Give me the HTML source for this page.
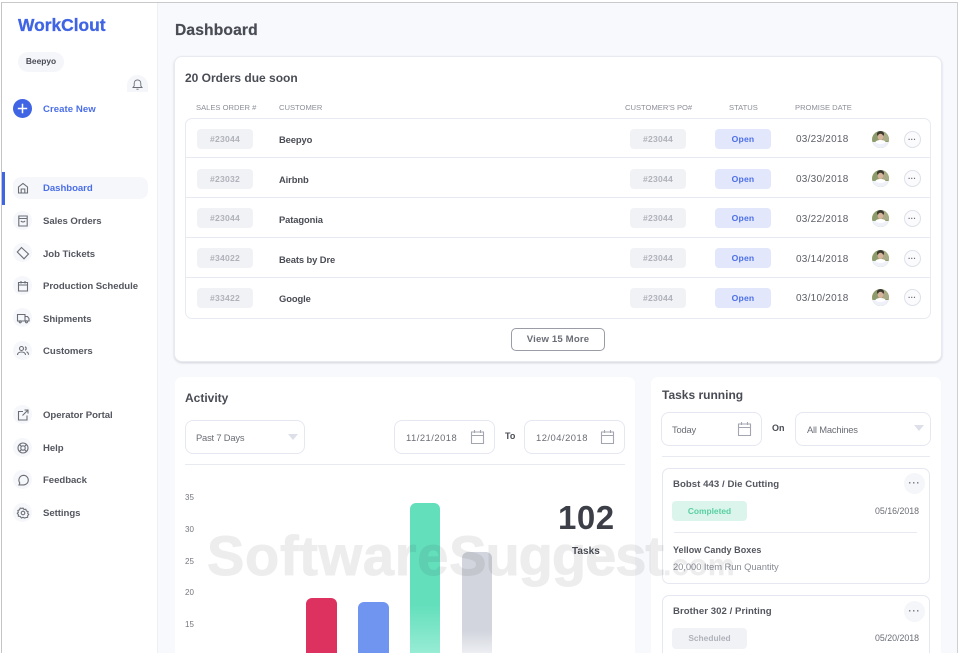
<!DOCTYPE html>
<html><head><meta charset="utf-8"><title>WorkClout Dashboard</title>
<style>
*{box-sizing:border-box}
html,body{margin:0;padding:0;width:960px;height:653px;overflow:hidden}
body{background:#fff;font-family:"Liberation Sans",sans-serif;color:#4a4c55}
#w{position:relative;width:960px;height:653px;overflow:hidden;background:#fff}
.a{position:absolute;white-space:nowrap}
.nav{position:absolute;left:43px;font-size:9.6px;font-weight:700;color:#54565f;line-height:12px;letter-spacing:-.05px}
.ic{position:absolute;left:13px;width:19px;height:19px;border-radius:50%;background:#f6f7fb}
.ic svg{position:absolute;left:2.5px;top:2.5px;width:14px;height:14px;fill:none;stroke:#6b6e78;stroke-width:1.1}
.card{position:absolute;background:#fff;border-radius:7px}
.th{position:absolute;top:103px;font-size:7.6px;line-height:10px;color:#8d8f99}
.pill{position:absolute;width:56px;height:20px;border-radius:4px;background:#f1f2f6;color:#b0b2bb;font-size:8.6px;font-weight:700;line-height:20px;text-align:center;letter-spacing:.2px}
.open{background:#e2e7fb;color:#4c6fe8}
.cust{position:absolute;left:279px;font-size:9.4px;font-weight:700;color:#4a4c55;line-height:12px;letter-spacing:-.1px}
.date{position:absolute;left:796px;font-size:10px;color:#5d5f68;line-height:12px;letter-spacing:.25px}
.hr{position:absolute;left:186px;width:744px;height:1px;background:#e8eaf2}
.av{position:absolute;left:871.5px;width:17px;height:17px}
.more{position:absolute;left:903.500px;width:17px;height:17px;border-radius:50%;border:1px solid #dfe1ea;background:#fbfbfd;color:#6b6e78;font-size:8px;line-height:16px;text-align:center;font-weight:700}
.inp{position:absolute;height:34px;border:1px solid #e6e8f1;border-radius:8px;background:#fff;font-size:9.4px;color:#6b6d76;line-height:33px;letter-spacing:-.2px}
.dt{letter-spacing:.5px}
.cal{position:absolute;width:15px;height:16px;fill:none;stroke:#a3a6b1;stroke-width:1.1}
.tri{position:absolute;width:0;height:0;border-left:5px solid transparent;border-right:5px solid transparent;border-top:6px solid #dddfe9}
.h2{font-size:12px;font-weight:700;color:#4a4c55;line-height:15px}
.tb{font-size:9.6px;font-weight:700;color:#54565f;line-height:12px;letter-spacing:.05px}
.dots{position:absolute;left:904px;width:21px;height:21px;border-radius:50%;background:#f5f6fa;color:#666973;font-size:9px;font-weight:700;text-align:center;line-height:21px;letter-spacing:1px}
.bar{position:absolute;border-radius:6px 6px 0 0}
.yl{position:absolute;left:185px;font-size:8px;color:#74767f;line-height:10px}
</style></head><body><div id="w">
<!-- main bg -->
<div class="a" style="left:157px;top:0;width:803px;height:653px;background:#f8f9fc"></div>
<div class="a" style="left:157px;top:0;width:1px;height:653px;background:#eef0f5"></div>

<!-- sidebar -->
<div class="a" style="left:18px;top:15px;font-size:17.4px;font-weight:700;color:#3f64e4;line-height:20px;-webkit-text-stroke:.3px #3f64e4">WorkClout</div>
<div class="a" style="left:18px;top:52px;width:46px;height:20px;border-radius:10px;background:#f5f6fa;font-size:8.4px;font-weight:700;line-height:19px;text-align:center;color:#4a4c55">Beepyo</div>
<div class="a" style="left:127px;top:75px;width:21px;height:17px;border-radius:11px 11px 0 0;background:#f5f6fa"></div>
<svg class="a" style="left:132px;top:78px" width="11" height="13" viewBox="0 0 11 13" fill="none" stroke="#6b6e78" stroke-width=".9"><path d="M1 9.500h9l-1.200-1.600V5.200a3.300 3.300 0 0 0-6.600 0v2.700zM4.400 11.200h2.200"/></svg>
<div class="a" style="left:13px;top:99px;width:19px;height:19px;border-radius:50%;background:#3f64e4"></div>
<svg class="a" style="left:13px;top:99px" width="19" height="19" stroke="#fff" stroke-width="1.5"><path d="M9.500 4.800v9.400M4.800 9.500h9.400"/></svg>
<div class="a" style="left:43px;top:104px;font-size:9.6px;font-weight:700;color:#4a6ee8;line-height:12px;letter-spacing:.05px">Create New</div>

<div class="a" style="left:2px;top:172px;width:3px;height:33px;background:#3f64e4"></div>
<div class="a" style="left:13px;top:177px;width:135px;height:22px;border-radius:8px;background:#f6f7fb"></div>

<div class="ic" style="top:178px;background:none"><svg viewBox="0 0 14 14"><path d="M2.500 12V6L7 2.500 11.500 6V12zM5.200 12V8h3.600v4"/></svg></div>
<div class="nav" style="top:183px;color:#4a6ee8">Dashboard</div>
<div class="ic" style="top:211px"><svg viewBox="0 0 14 14"><path d="M2.800 2h8.400v10H2.800zM2.800 4.500h8.400M5 6.800c.6 1.500 3.400 1.500 4 0"/></svg></div>
<div class="nav" style="top:216px">Sales Orders</div>
<div class="ic" style="top:243px"><svg viewBox="0 0 14 14"><path d="M5.500 1.500l7 6.500-4.500 4.800L1.300 6z"/></svg></div>
<div class="nav" style="top:249px">Job Tickets</div>
<div class="ic" style="top:276px"><svg viewBox="0 0 14 14"><path d="M2.500 3.500h9v8.500h-9zM2.500 6h9M5 2v2.500M9 2v2.500"/></svg></div>
<div class="nav" style="top:281px">Production Schedule</div>
<div class="ic" style="top:308px"><svg viewBox="0 0 14 14"><path d="M1.500 3.500h7.500v6.500H1.500zM9 5.500h2.500l1.500 2v2.500H9z"/><circle cx="4.200" cy="10.800" r="1"/><circle cx="10.500" cy="10.800" r="1"/></svg></div>
<div class="nav" style="top:314px">Shipments</div>
<div class="ic" style="top:341px"><svg viewBox="0 0 14 14"><circle cx="5.500" cy="4.500" r="2"/><path d="M1.500 11c0-4 8-4 8 0M9 2.800a1.800 1.800 0 0 1 0 3.400M10.500 7.800c1.200.5 2 1.500 2 3"/></svg></div>
<div class="nav" style="top:346px">Customers</div>

<div class="ic" style="top:405px"><svg viewBox="0 0 14 14"><path d="M7 3.500H2.500v8.500H11V7.500M6.500 7.500L12 2M8.500 2H12v3.500"/></svg></div>
<div class="nav" style="top:410px">Operator Portal</div>
<div class="ic" style="top:438px"><svg viewBox="0 0 14 14"><circle cx="7" cy="7" r="5"/><circle cx="7" cy="7" r="2.200"/><path d="M3.500 3.500l2 2M10.500 3.500l-2 2M3.500 10.500l2-2M10.500 10.500l-2-2"/></svg></div>
<div class="nav" style="top:443px">Help</div>
<div class="ic" style="top:470px"><svg viewBox="0 0 14 14"><path d="M7.500 2.300a4.800 4.800 0 0 1 0 9.600H3l.8-2a4.800 4.800 0 0 1 3.700-7.600z"/></svg></div>
<div class="nav" style="top:475px">Feedback</div>
<div class="ic" style="top:503px"><svg viewBox="0 0 14 14"><circle cx="7" cy="7" r="1.800"/><path d="M7 2l1 1.500 1.800-.3.600 1.700 1.700.7-.4 1.800 1 1-1 1.300-.1 1.600-1.800.3L8.500 12 7 11.400 5.500 12l-1.300-1.500-1.800-.3-.1-1.600-1-1.300 1-1-.4-1.800 1.700-.7.600-1.700 1.800.3z"/></svg></div>
<div class="nav" style="top:508px">Settings</div>

<!-- header -->
<div class="a" style="left:175px;top:21px;font-size:15.6px;font-weight:700;color:#4a4c55;line-height:19px;letter-spacing:.15px;-webkit-text-stroke:.2px #4a4c55">Dashboard</div>

<!-- orders card -->
<div class="card" style="left:174px;top:56px;width:768px;height:306px;border:1px solid #e8eaf2;box-shadow:0 1px 2px rgba(60,65,90,.2);border-radius:8px"></div>
<div class="a h2" style="left:185px;top:71px">20 Orders due soon</div>
<div class="th" style="left:196px">SALES ORDER #</div>
<div class="th" style="left:279px">CUSTOMER</div>
<div class="th" style="left:625px">CUSTOMER'S PO#</div>
<div class="th" style="left:729px">STATUS</div>
<div class="th" style="left:795px">PROMISE DATE</div>
<div class="a" style="left:185px;top:118px;width:746px;height:201px;border:1px solid #e8eaf2;border-radius:7px"></div>
<div class="hr" style="top:157px"></div><div class="hr" style="top:197px"></div><div class="hr" style="top:237px"></div><div class="hr" style="top:277px"></div>

<svg width="0" height="0" style="position:absolute"><defs><clipPath id="c"><circle cx="8.500" cy="8.500" r="8.500"/></clipPath><g id="av" clip-path="url(#c)"><rect width="17" height="17" fill="#8d9a6c"/><rect x="11" width="6" height="10" fill="#a8ab86"/><ellipse cx="8.500" cy="3" rx="3.600" ry="3" fill="#3c3a30"/><ellipse cx="8.500" cy="6" rx="2.800" ry="3.200" fill="#d9b49c"/><rect y="11" width="17" height="6" fill="#eef0fa"/><ellipse cx="8.500" cy="11" rx="5" ry="2" fill="#fff"/></g></defs></svg>

<!-- row 1 -->
<div class="pill" style="left:197px;top:128.500px">#23044</div><div class="cust" style="top:134px">Beepyo</div><div class="pill" style="left:630px;top:128.500px">#23044</div><div class="pill open" style="left:715px;top:128.500px">Open</div><div class="date" style="top:134px">03/23/2018</div><svg class="av" style="top:131px"><use href="#av"/></svg><div class="more" style="top:130.500px">···</div>
<!-- row 2 -->
<div class="pill" style="left:197px;top:168.500px">#23032</div><div class="cust" style="top:173.500px">Airbnb</div><div class="pill" style="left:630px;top:168.500px">#23044</div><div class="pill open" style="left:715px;top:168.500px">Open</div><div class="date" style="top:174px">03/30/2018</div><svg class="av" style="top:170px"><use href="#av"/></svg><div class="more" style="top:170px">···</div>
<!-- row 3 -->
<div class="pill" style="left:197px;top:208px">#23044</div><div class="cust" style="top:213.500px">Patagonia</div><div class="pill" style="left:630px;top:208px">#23044</div><div class="pill open" style="left:715px;top:208px">Open</div><div class="date" style="top:214px">03/22/2018</div><svg class="av" style="top:210px"><use href="#av"/></svg><div class="more" style="top:210px">···</div>
<!-- row 4 -->
<div class="pill" style="left:197px;top:248px">#34022</div><div class="cust" style="top:253.500px">Beats by Dre</div><div class="pill" style="left:630px;top:248px">#23044</div><div class="pill open" style="left:715px;top:248px">Open</div><div class="date" style="top:254px">03/14/2018</div><svg class="av" style="top:250px"><use href="#av"/></svg><div class="more" style="top:250px">···</div>
<!-- row 5 -->
<div class="pill" style="left:197px;top:288px">#33422</div><div class="cust" style="top:293px">Google</div><div class="pill" style="left:630px;top:288px">#23044</div><div class="pill open" style="left:715px;top:288px">Open</div><div class="date" style="top:293px">03/10/2018</div><svg class="av" style="top:289px"><use href="#av"/></svg><div class="more" style="top:289px">···</div>

<div class="a" style="left:511px;top:328px;width:94px;height:23px;border:1px solid #9a9ca6;border-radius:5px;text-align:center;font-size:9.6px;font-weight:700;line-height:22px;color:#6b6d76;letter-spacing:.15px">View 15 More</div>

<!-- activity card -->
<div class="card" style="left:175px;top:377px;width:460px;height:290px"></div>
<div class="a h2" style="left:185px;top:391px">Activity</div>
<div class="inp" style="left:185px;top:420px;width:120px;padding-left:10px">Past 7 Days</div>
<div class="tri" style="left:288px;top:434px"></div>
<div class="inp dt" style="left:394px;top:420px;width:101px;padding-left:11px">11/21/2018</div>
<svg class="cal" style="left:470px;top:429px" viewBox="0 0 15 16"><path d="M1.500 3h12v11.500h-12zM1.500 6.500h12M4.500 1v3M10.500 1v3"/></svg>
<div class="a tb" style="left:505px;top:430px;color:#4a4c55;font-size:9px">To</div>
<div class="inp dt" style="left:524px;top:420px;width:101px;padding-left:11px">12/04/2018</div>
<svg class="cal" style="left:600px;top:429px" viewBox="0 0 15 16"><path d="M1.500 3h12v11.500h-12zM1.500 6.500h12M4.500 1v3M10.500 1v3"/></svg>
<div class="a" style="left:185px;top:464px;width:440px;height:1px;background:#e8eaf2"></div>

<div class="yl" style="top:493px">35</div><div class="yl" style="top:525px">30</div><div class="yl" style="top:557px">25</div><div class="yl" style="top:588px">20</div><div class="yl" style="top:620px">15</div>

<div class="bar" style="left:306px;top:598px;width:31px;height:55px;background:#dd3160"></div>
<div class="bar" style="left:358px;top:602px;width:31px;height:51px;background:#6f95f0"></div>
<div class="bar" style="left:410px;top:503px;width:30px;height:150px;background:linear-gradient(#63dfbc 0,#63dfbc 68%,#97ecd4 100%)"></div>
<div class="bar" style="left:462px;top:552px;width:30px;height:101px;background:linear-gradient(#d2d5dd 0,#d2d5dd 78%,#eceef2 100%)"></div>

<div class="a" style="left:558px;top:499px;font-size:33px;font-weight:700;color:#3d3f48;line-height:38px;letter-spacing:.5px">102</div>
<div class="a tb" style="left:572px;top:546px;color:#4a4c55;font-size:10px">Tasks</div>

<!-- tasks card -->
<div class="card" style="left:651px;top:377px;width:290px;height:290px"></div>
<div class="a h2" style="left:662px;top:388px">Tasks running</div>
<div class="inp" style="left:661px;top:412px;width:101px;padding-left:10px">Today</div>
<svg class="cal" style="left:737px;top:421px" viewBox="0 0 15 16"><path d="M1.500 3h12v11.500h-12zM1.500 6.500h12M4.500 1v3M10.500 1v3"/></svg>
<div class="a tb" style="left:772px;top:422px;color:#4a4c55;font-size:9px">On</div>
<div class="inp" style="left:795px;top:412px;width:136px;padding-left:11px">All Machines</div>
<div class="tri" style="left:914px;top:425px"></div>
<div class="a" style="left:662px;top:456px;width:268px;height:1px;background:#e8eaf2"></div>

<div class="a" style="left:662px;top:468px;width:268px;height:116px;border:1px solid #e6e8f1;border-radius:7px"></div>
<div class="a tb" style="left:673px;top:479px">Bobst 443 / Die Cutting</div>
<div class="dots" style="top:473px">···</div>
<div class="a" style="left:672px;top:501px;width:75px;height:20px;border-radius:4px;background:#dcf5ec;color:#58cfa2;font-size:8.4px;font-weight:700;line-height:20px;text-align:center">Completed</div>
<div class="a" style="left:875px;top:505px;font-size:8.8px;color:#6b6d76;line-height:12px">05/16/2018</div>
<div class="a" style="left:674px;top:532px;width:243px;height:1px;background:#e8eaf2"></div>
<div class="a tb" style="left:673px;top:544px;font-size:9px">Yellow Candy Boxes</div>
<div class="a" style="left:673px;top:561px;font-size:9.4px;color:#8a8c95;line-height:12px;letter-spacing:-.05px">20,000 Item Run Quantity</div>

<div class="a" style="left:662px;top:595px;width:268px;height:80px;border:1px solid #e6e8f1;border-radius:7px"></div>
<div class="a tb" style="left:673px;top:606px">Brother 302 / Printing</div>
<div class="dots" style="top:601px">···</div>
<div class="a" style="left:672px;top:628px;width:75px;height:21px;border-radius:4px;background:#f1f2f6;color:#b0b2bb;font-size:8.4px;font-weight:700;line-height:21px;text-align:center">Scheduled</div>
<div class="a" style="left:875px;top:632px;font-size:8.8px;color:#6b6d76;line-height:12px">05/20/2018</div>

<!-- watermark -->
<div class="a" style="left:207px;top:524px;font-size:56px;font-weight:700;line-height:64px;color:#282832;opacity:.08;letter-spacing:.7px;-webkit-text-stroke:1px #282832">Software<span style="letter-spacing:-1px">Suggest</span><span style="font-size:30px;letter-spacing:.5px;-webkit-text-stroke:.4px #282832">.com</span></div>

<!-- screenshot frame -->
<div class="a" style="left:0;top:2px;width:958px;height:1px;background:#c9c9cb"></div>
<div class="a" style="left:1px;top:2px;width:1px;height:651px;background:#c4c4c6"></div>
<div class="a" style="left:957px;top:2px;width:1px;height:651px;background:#cfcfd2"></div>
<div class="a" style="left:958px;top:0;width:2px;height:653px;background:#fff"></div>
<div class="a" style="left:0;top:0;width:960px;height:2px;background:#fff"></div>
<div class="a" style="left:0;top:0;width:1px;height:653px;background:#fff"></div>
</div></body></html>
